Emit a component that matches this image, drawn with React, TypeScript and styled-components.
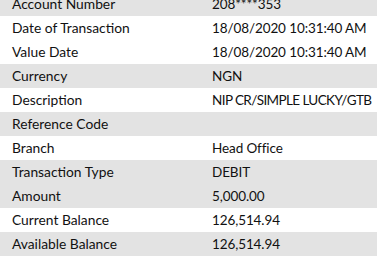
import React from "react";
import styled, { createGlobalStyle } from "styled-components";

const Global = createGlobalStyle`
  html, body { margin: 0; padding: 0; background: #ffffff; }
  body { font-family: Lato, "Open Sans", sans-serif; overflow: hidden; }
`;

const Table = styled.div`
  display: flex;
  flex-direction: column;
  margin-top: -8px;
  width: 377px;
`;

const Row = styled.div<{ $shaded: boolean }>`
  display: grid;
  grid-template-columns: 200px 1fr;
  height: 24px;
  align-items: center;
  background: ${(p) => (p.$shaded ? "#e3e3e3" : "#ffffff")};
`;

const Label = styled.div`
  padding-left: 12px;
  font-size: 13.8px;
  color: #111111;
  white-space: nowrap;
  line-height: 24px;
`;

const Value = styled.div<{ $tight: boolean }>`
  padding-left: 12px;
  font-size: 13.5px;
  letter-spacing: ${(p) => (p.$tight ? "-0.6px" : "-0.1px")};
  color: #111111;
  white-space: nowrap;
  line-height: 24px;
`;

const rows: [string, string, boolean][] = [
  ["Account Number", "208****353", true],
  ["Date of Transaction", "18/08/2020 10:31:40 AM", false],
  ["Value Date", "18/08/2020 10:31:40 AM", false],
  ["Currency", "NGN", true],
  ["Description", "NIP CR/SIMPLE LUCKY/GTB", false],
  ["Reference Code", "", true],
  ["Branch", "Head Office", false],
  ["Transaction Type", "DEBIT", true],
  ["Amount", "5,000.00", true],
  ["Current Balance", "126,514.94", false],
  ["Available Balance", "126,514.94", true],
];

export default function App() {
  return (
    <>
      <Global />
      <Table>
        {rows.map(([k, v, s]) => (
          <Row key={k} $shaded={s}>
            <Label>{k}</Label>
            <Value $tight={v.length > 22 && /^[A-Z /]+$/.test(v)}>{v}</Value>
          </Row>
        ))}
      </Table>
    </>
  );
}
